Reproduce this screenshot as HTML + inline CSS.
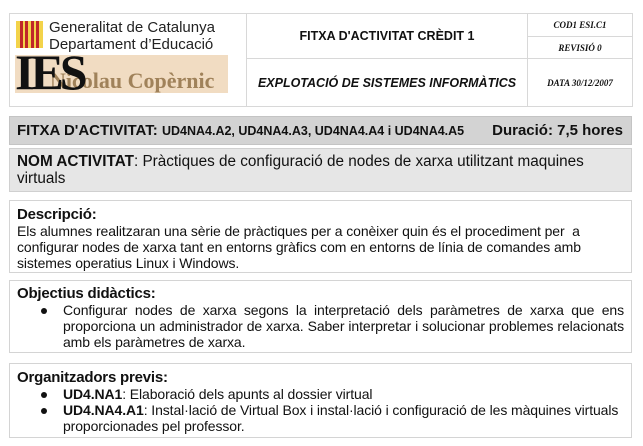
<!DOCTYPE html>
<html><head><meta charset="utf-8"><style>
*{margin:0;padding:0;box-sizing:border-box}
body{width:643px;height:446px;background:#fff;font-family:"Liberation Sans",sans-serif;color:#111;position:relative;overflow:hidden}
.a{position:absolute}
.cell{position:absolute;border:1px solid #d8d8d8;display:flex;align-items:center;justify-content:center}
.box{position:absolute;left:9px;width:623px;border:1px solid #d4d4d4;padding:2px 7px;font-size:14px;line-height:16px;letter-spacing:-0.1px;white-space:nowrap}
ul{list-style:none}
li{position:relative;padding-left:46px}
li:before{content:"";position:absolute;left:24px;top:6px;width:6px;height:6px;border-radius:50%;background:#111}
.serif{font-family:"Liberation Serif",serif;font-style:italic;font-weight:bold;font-size:9px}
h{font-weight:bold;font-size:15px;letter-spacing:-0.2px}
.j{display:block;text-align:justify;text-align-last:justify;white-space:normal}
</style></head><body>
<div class="a" style="left:9px;top:13px;width:624px;height:94px;border:1px solid #d8d8d8"></div>
<div class="cell" style="left:9px;top:13px;width:238px;height:94px"></div>
<div class="a" style="left:16px;top:21px;width:27px;height:27px;background:#f3d34a;display:flex;justify-content:space-around;padding:0 3px">
<i style="width:3px;background:#c0262a"></i><i style="width:3px;background:#c0262a"></i><i style="width:3px;background:#c0262a"></i><i style="width:3px;background:#c0262a"></i></div>
<div class="a" style="left:49px;top:19px;font-size:15px;line-height:17px;color:#222">Generalitat de Catalunya<br>Departament d’Educació</div>
<div class="a" style="left:15px;top:55px;width:213px;height:38px;background:#f1dcc2"></div>
<div class="a" style="left:50px;top:69px;font-family:'Liberation Serif',serif;font-weight:bold;font-size:22px;line-height:24px;color:#a0825a">Nicolau Copèrnic</div>
<div class="a" style="left:15px;top:47px;font-family:'Liberation Serif',serif;font-weight:bold;font-size:50px;line-height:50px;color:#111;letter-spacing:-4px">IES</div>
<div class="cell" style="left:246px;top:13px;width:282px;height:46px;font-weight:bold;font-size:12.5px">FITXA D'ACTIVITAT CRÈDIT 1</div>
<div class="cell" style="left:246px;top:58px;width:282px;height:49px;font-weight:bold;font-style:italic;font-size:12.5px">EXPLOTACIÓ DE SISTEMES INFORMÀTICS</div>
<div class="cell serif" style="left:527px;top:13px;width:106px;height:24px">COD1 ESI.C1</div>
<div class="cell serif" style="left:527px;top:36px;width:106px;height:23px">REVISIÓ 0</div>
<div class="cell serif" style="left:527px;top:58px;width:106px;height:49px">DATA 30/12/2007</div>

<div class="a" style="left:9px;top:116px;width:623px;height:29px;background:#d3d3d3;border:1px solid #c4c4c4;padding:4px 7px;font-weight:bold;font-size:15px;line-height:19px">FITXA D'ACTIVITAT: <span style="font-size:12.5px">UD4NA4.A2, UD4NA4.A3, UD4NA4.A4 i UD4NA4.A5</span><span style="position:absolute;right:8px;top:4px">Duració: 7,5 hores</span></div>
<div class="a" style="left:9px;top:148px;width:623px;height:44px;background:#e6e6e6;border:1px solid #d0d0d0;padding:4px 7px;font-size:15.3px;line-height:17px"><b>NOM ACTIVITAT</b>: Pràctiques de configuració de nodes de xarxa utilitzant maquines<br>virtuals</div>
<div class="box" style="top:200px;height:73px;padding-top:5px"><h>Descripció:</h><br>Els alumnes realitzaran una sèrie de pràctiques per a conèixer quin és el procediment per &nbsp;a<br>configurar nodes de xarxa tant en entorns gràfics com en entorns de línia de comandes amb<br>sistemes operatius Linux i Windows.</div>
<div class="box" style="top:280px;height:73px;padding-top:4px"><h>Objectius didàctics:</h>
<ul><li><span class="j">Configurar nodes de xarxa segons la interpretació dels paràmetres de xarxa que ens</span><span class="j">proporciona un administrador de xarxa. Saber interpretar i solucionar problemes relacionats</span>amb els paràmetres de xarxa.</li></ul></div>
<div class="box" style="top:363px;height:75px;padding-top:5px"><h>Organitzadors previs:</h>
<ul><li><b>UD4.NA1</b>: Elaboració dels apunts al dossier virtual</li><li><b>UD4.NA4.A1</b>: Instal·lació de Virtual Box i instal·lació i configuració de les màquines virtuals<br>proporcionades pel professor.</li></ul></div>
</body></html>
